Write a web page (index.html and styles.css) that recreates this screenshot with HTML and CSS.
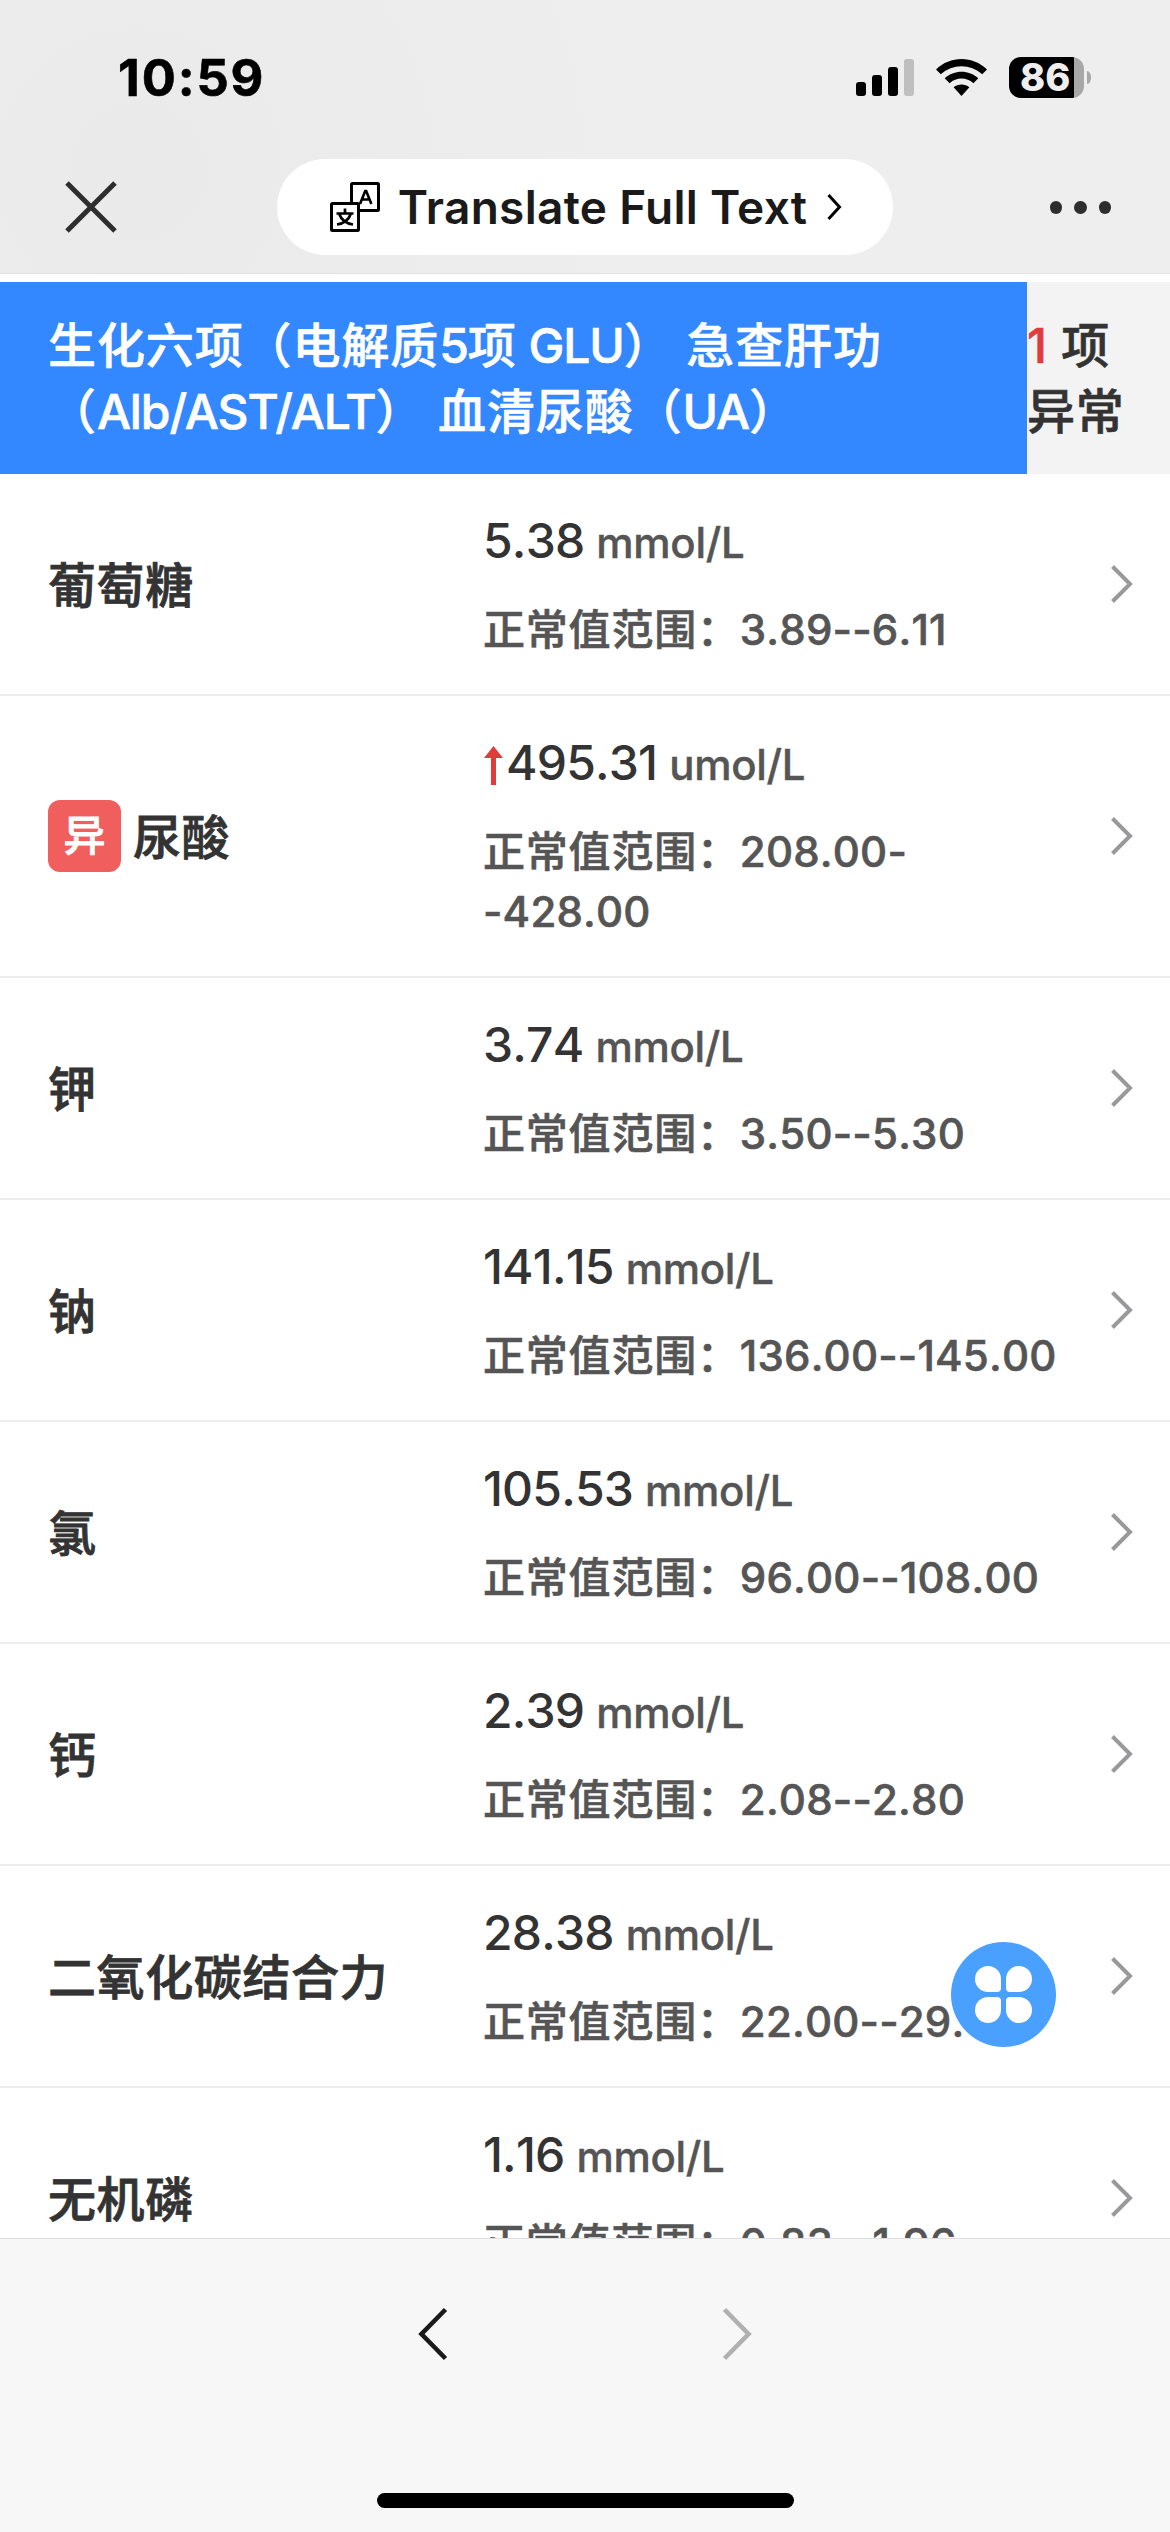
FILE: index.html
```
<!DOCTYPE html>
<html lang="zh-CN">
<head>
  <meta charset="UTF-8">
  <meta name="viewport" content="width=device-width, initial-scale=1.0">
  <title>检验报告</title>
  <link rel="stylesheet" href="styles.css">
</head>
<body>
  <svg class="defs">
    <symbol id="arrow" viewBox="0 0 22 38">
      <path d="M1.5 1.5 L19 19 L1.5 36.5" fill="none" stroke="#98999b" stroke-width="4"/>
    </symbol>
  </svg>

  <header class="top">
    <div class="status">
      <span class="time">10:59</span>
      <div class="status-icons">
        <svg width="58" height="38" viewBox="0 0 58 38">
          <rect x="0" y="23" width="10" height="14" rx="3"/>
          <rect x="16" y="16" width="10" height="21" rx="3"/>
          <rect x="32" y="8" width="10" height="29" rx="3"/>
          <rect x="48" y="0" width="10" height="37" rx="3" fill="#bfbfbf"/>
        </svg>
        <svg width="51" height="38" viewBox="0 0 51 38">
          <path d="M0 10.5 C14 -3.5 37 -3.5 51 10.5 L46.2 15.3 C34.5 4.5 16.5 4.5 4.8 15.3 Z"/>
          <path d="M8.7 19.2 C18 10.5 33 10.5 42.3 19.2 L37.4 24.2 C30.5 18 20.5 18 13.6 24.2 Z"/>
          <path d="M17.6 28.3 C22 24.6 29 24.6 33.4 28.3 L25.5 37 Z"/>
        </svg>
        <div class="battery"><span class="battery-num">86</span></div>
      </div>
    </div>
    <div class="nav">
      <svg class="close" width="54" height="54" viewBox="0 0 54 54">
        <path d="M3 3 L51 51 M51 3 L3 51" stroke="#2e2e2e" stroke-width="5" fill="none"/>
      </svg>
      <div class="pill">
        <svg width="50" height="50" viewBox="0 0 50 50" fill="none" stroke="#000" stroke-width="3">
          <rect x="21.5" y="1.5" width="27" height="27" rx="1"/>
          <path d="M30 22 L35.2 9 H36.2 L41.4 22 M32 17.5 H39.5" stroke-width="2.6"/>
          <rect x="1.5" y="21.5" width="27" height="27" rx="1" fill="#fff"/>
          <path d="M6.5 31.5 H23.5 M15 26.5 V31 M9 31.5 C11 37 16 41.5 23 42.5 M21 31.5 C19 37 14 41.5 7 42.5" stroke-width="2.7"/>
        </svg>
        <span class="pill-text">Translate Full Text</span>
        <svg width="15" height="28" viewBox="0 0 15 28">
          <path d="M1.5 2 L12.5 14 L1.5 26" fill="none" stroke="#000" stroke-width="3"/>
        </svg>
      </div>
      <div class="dots"><i></i><i></i><i></i></div>
    </div>
  </header>

  <main class="report">
    <div class="group">
      <div class="group-name">生化六项（电解质<span class="lat">5</span>项<span class="lat"> GLU</span>） 急查肝功<br>（<span class="lat">Alb/AST/ALT</span>） 血清尿酸（<span class="lat">UA</span>）</div>
      <div class="group-count"><b>1</b> 项<br>异常</div>
    </div>

    <div class="item">
      <div class="name"><span class="label">葡萄糖</span></div>
      <div class="info">
        <p class="value">5.38 <span class="unit">mmol/L</span></p>
        <p class="range">正常值范围：<span class="num">3.89--6.11</span></p>
      </div>
      <svg class="more"><use href="#arrow"/></svg>
    </div>
    <div class="item">
      <div class="name"><span class="tag">异</span><span class="label">尿酸</span></div>
      <div class="info">
        <p class="value"><svg class="up" viewBox="0 0 19 39"><path d="M9.5 0 L19 12 H12 V39 H7 V12 H0 Z" fill="#e03c3c"/></svg>495.31 <span class="unit">umol/L</span></p>
        <p class="range">正常值范围：<span class="num">208.00-<br>-428.00</span></p>
      </div>
      <svg class="more"><use href="#arrow"/></svg>
    </div>
    <div class="item">
      <div class="name"><span class="label">钾</span></div>
      <div class="info">
        <p class="value">3.74 <span class="unit">mmol/L</span></p>
        <p class="range">正常值范围：<span class="num">3.50--5.30</span></p>
      </div>
      <svg class="more"><use href="#arrow"/></svg>
    </div>
    <div class="item">
      <div class="name"><span class="label">钠</span></div>
      <div class="info">
        <p class="value">141.15 <span class="unit">mmol/L</span></p>
        <p class="range">正常值范围：<span class="num">136.00--145.00</span></p>
      </div>
      <svg class="more"><use href="#arrow"/></svg>
    </div>
    <div class="item">
      <div class="name"><span class="label">氯</span></div>
      <div class="info">
        <p class="value">105.53 <span class="unit">mmol/L</span></p>
        <p class="range">正常值范围：<span class="num">96.00--108.00</span></p>
      </div>
      <svg class="more"><use href="#arrow"/></svg>
    </div>
    <div class="item">
      <div class="name"><span class="label">钙</span></div>
      <div class="info">
        <p class="value">2.39 <span class="unit">mmol/L</span></p>
        <p class="range">正常值范围：<span class="num">2.08--2.80</span></p>
      </div>
      <svg class="more"><use href="#arrow"/></svg>
    </div>
    <div class="item">
      <div class="name"><span class="label">二氧化碳结合力</span></div>
      <div class="info">
        <p class="value">28.38 <span class="unit">mmol/L</span></p>
        <p class="range">正常值范围：<span class="num">22.00--29.00</span></p>
      </div>
      <svg class="more"><use href="#arrow"/></svg>
    </div>
    <div class="item">
      <div class="name"><span class="label">无机磷</span></div>
      <div class="info">
        <p class="value">1.16 <span class="unit">mmol/L</span></p>
        <p class="range">正常值范围：<span class="num">0.83--1.96</span></p>
      </div>
      <svg class="more"><use href="#arrow"/></svg>
    </div>
  </main>

  <div class="fab"><i></i><i></i><i></i><i></i></div>

  <footer class="bottom">
    <div class="pager">
      <svg width="30" height="54" viewBox="0 0 30 54">
        <path d="M27.5 2.5 L3.5 27 L27.5 51.5" fill="none" stroke="#1a1a1a" stroke-width="4.6"/>
      </svg>
      <svg width="30" height="54" viewBox="0 0 30 54">
        <path d="M2.5 2.5 L26.5 27 L2.5 51.5" fill="none" stroke="#b0b0b0" stroke-width="4.6"/>
      </svg>
    </div>
    <div class="home-bar"></div>
  </footer>
</body>
</html>
```
FILE: styles.css
```
* { box-sizing: border-box; }
body {
  margin: 0; width: 1170px; height: 2532px; overflow: hidden; position: relative;
  display: flex; flex-direction: column; background: #fff; color: #333;
  font-family: Inter, "Noto Sans CJK SC", sans-serif; font-weight: 500;
}
svg { display: block; flex: none; }
p { margin: 0; }
.defs { width: 0; height: 0; position: absolute; }

/* status bar + nav */
.top {
  height: 274px; flex: none; border-bottom: 1px solid #e2e2e2;
  background: radial-gradient(circle at 140px 170px, #eaeaea, #eee 480px);
}
.status { height: 159px; padding: 57px 86px 0 118px; display: flex; justify-content: space-between; align-items: flex-start; }
.time { font-size: 50.5px; font-weight: 700; color: #000; line-height: 42px; letter-spacing: 1.9px; -webkit-text-stroke: 0.6px #000; }
.status-icons { display: flex; align-items: center; gap: 22px; height: 41px; }
.battery {
  width: 75px; height: 41px; border-radius: 12px; position: relative;
  background: linear-gradient(to right, #000 65px, #a8a8a8 65px);
}
.battery::after {
  content: ""; position: absolute; left: 78px; top: 14px; width: 4px; height: 13px;
  border-radius: 0 4px 4px 0 / 0 6px 6px 0; background: #a8a8a8;
}
.battery-num { display: block; padding-left: 11px; color: #eee; font-size: 38px; font-weight: 800; line-height: 41px; }
.nav { height: 96px; padding: 0 59px 0 64px; display: flex; align-items: center; justify-content: space-between; }
.pill {
  width: 616px; height: 96px; margin-left: 2px; padding-left: 53px; border-radius: 48px;
  background: #fff; display: flex; align-items: center;
}
.pill-text { margin-left: 18px; width: 429px; font-size: 46px; font-weight: 600; color: #1a1a1a; white-space: nowrap; letter-spacing: 0.3px; }
.dots { display: flex; gap: 12px; }
.dots i { width: 12.5px; height: 13px; border-radius: 50%; background: #2e2e2e; }

/* report */
.report { flex: 1; min-height: 0; overflow: hidden; padding-top: 8px; }
.group { display: flex; height: 192px; font-size: 48px; line-height: 66px; background: #f3f3f3; white-space: nowrap; -webkit-text-stroke: 0.6px; }
.group-name { width: 1027px; padding: 31px 0 0 48px; background: #3388ff; color: #fff; letter-spacing: 0.9px; }
.group-name .lat { letter-spacing: -1.1px; }
.group-count { padding-top: 31px; letter-spacing: 0.8px; }
.group-count b { font-weight: 500; color: #e03c3c; }
.item { display: flex; min-height: 222px; border-bottom: 2px solid #ececee; align-items: center; }
.name { width: 483px; padding-left: 48px; display: flex; align-items: center; font-size: 48px; letter-spacing: 0.6px; -webkit-text-stroke: 0.8px; }
.label { margin-bottom: 5px; }
.tag {
  width: 73px; height: 72px; margin-right: 12px; border-radius: 12px; background: #f05e5e; color: #fff;
  font-size: 42px; line-height: 71px; text-align: center; letter-spacing: 0;
}
.info { width: 628px; padding: 34px 0; align-self: flex-start; white-space: nowrap; }
.value { font-size: 48px; line-height: 66px; letter-spacing: -0.8px; font-kerning: none; }
.up { display: inline-block; width: 19px; height: 39px; margin: 0 3px -5px 1px; }
.unit { font-size: 42px; line-height: 1; color: #555; letter-spacing: -0.3px; -webkit-text-stroke: 0.4px; }
.range { margin-top: 26px; font-size: 42px; line-height: 60px; color: #555; letter-spacing: 0.8px; -webkit-text-stroke: 0.6px; }
.num { letter-spacing: 0.2px; font-kerning: none; }
.more { width: 22px; height: 38px; }

.fab {
  position: absolute; left: 951px; top: 1942px; width: 105px; height: 105px; border-radius: 50%;
  background: #4aa0ff; display: grid; grid-template-columns: 26px 26px; grid-auto-rows: 26px;
  gap: 5px; place-content: center;
}
.fab i { background: #fff; border-radius: 50%; }
.fab i:nth-child(1) { border-bottom-right-radius: 4px; }
.fab i:nth-child(2) { border-bottom-left-radius: 4px; }
.fab i:nth-child(3) { border-top-right-radius: 4px; }
.fab i:nth-child(4) { border-top-left-radius: 4px; }

/* bottom toolbar */
.bottom { height: 294px; flex: none; border-top: 1px solid #dedede; background: #f7f7f7; }
.pager { padding: 68px 0 0; display: flex; justify-content: center; gap: 274px; }
.home-bar { width: 417px; height: 15px; margin: 132px auto 0; border-radius: 8px; background: #000; }
```
